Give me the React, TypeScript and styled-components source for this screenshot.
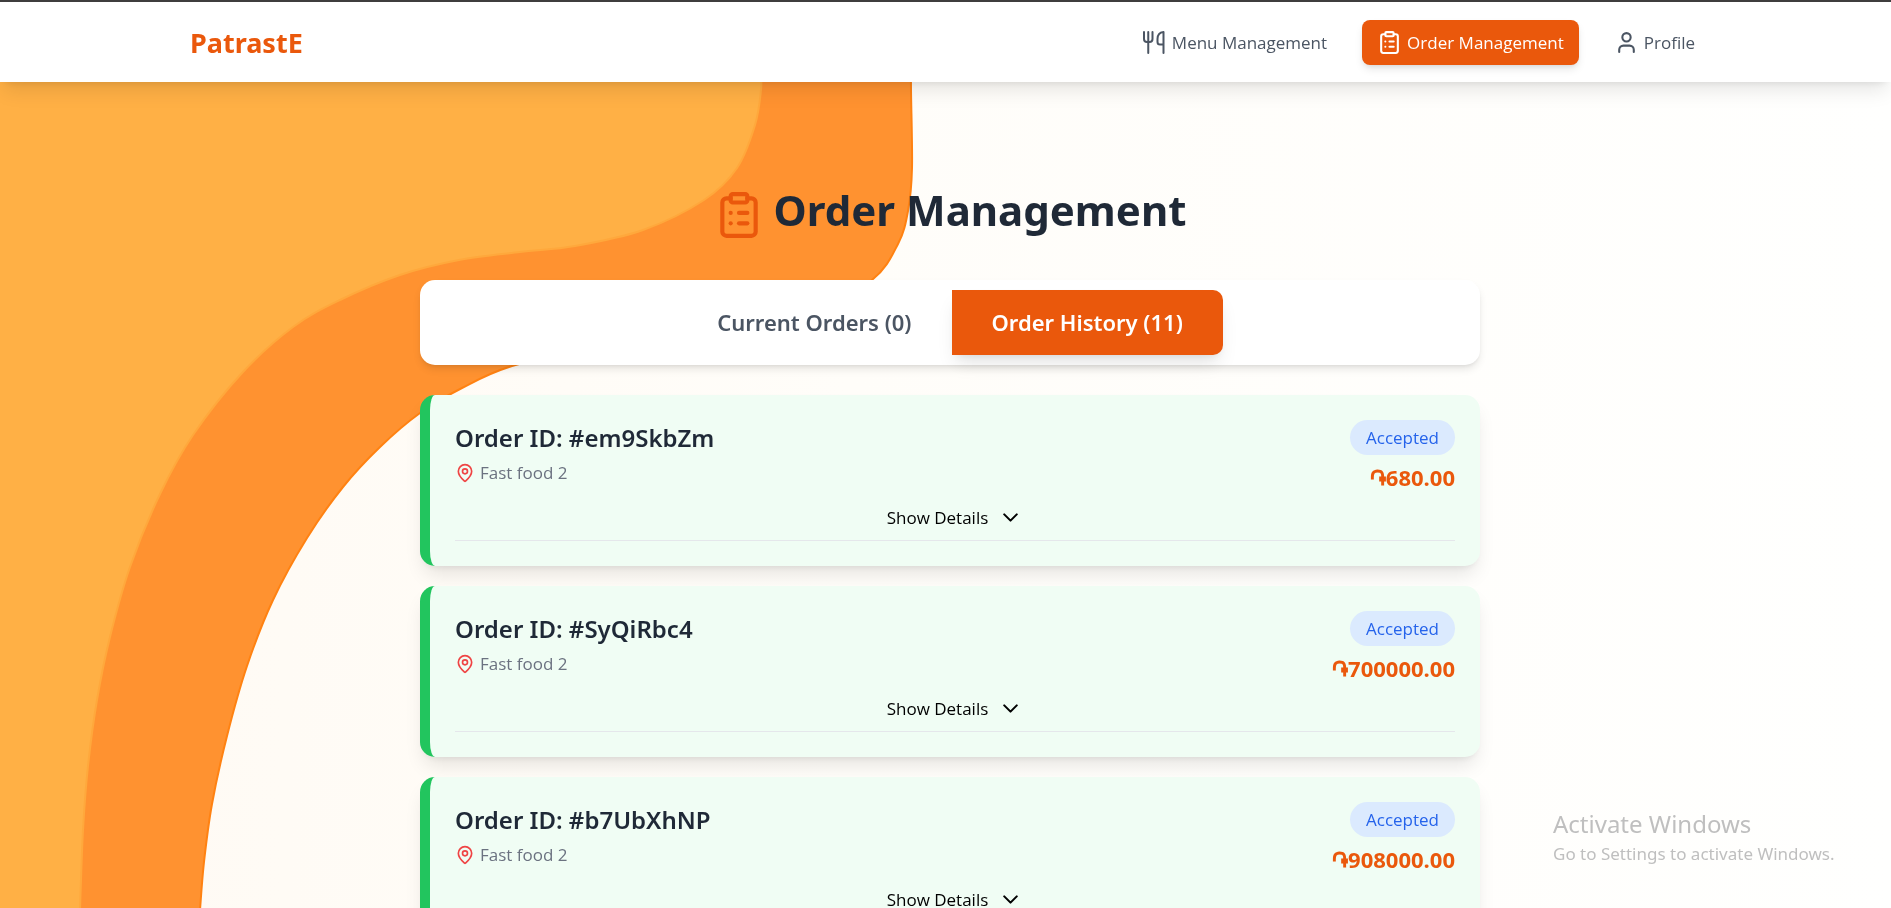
import React from "react";
import styled, { createGlobalStyle, css } from "styled-components";
import { ChevronDown, ClipboardList, MapPin, User } from "lucide-react";

const displayFont = `"Segoe UI", "Noto Sans", "Open Sans", sans-serif`;
const textFont = `"Segoe UI", "Open Sans", "Noto Sans", sans-serif`;

const GlobalStyle = createGlobalStyle`
  *, *::before, *::after { box-sizing: border-box; }
  body {
    margin: 0;
    background: #fffdfa;
    color: #1f2937;
    font-family: ${textFont};
    font-size: 17px;
    line-height: 25px;
  }
  h1, h2, p, ul { margin: 0; padding: 0; }
  h1, h2 { font-family: ${displayFont}; }
  ul { list-style: none; }
  button { font: inherit; border: 0; background: none; padding: 0; cursor: pointer; }
  a { color: inherit; text-decoration: none; }
`;

const Backdrop = styled.svg`
  position: fixed;
  inset: 0;
  width: 100%;
  height: 100%;
  z-index: -1;
`;

const Page = styled.div`
  height: 100vh;
  overflow-x: hidden;
  overflow-y: auto;
  scrollbar-width: none;
`;

const Header = styled.header`
  position: sticky;
  top: 0;
  z-index: 10;
  padding: 18px 0 17px 9px;
  border-top: 2px solid #3f3d3e;
  background: #fff;
  box-shadow: 0 12px 19px -4px rgba(0, 0, 0, 0.1), 0 5px 8px -5px rgba(0, 0, 0, 0.1);
`;

const HeaderInner = styled.div`
  display: flex;
  align-items: center;
  justify-content: space-between;
  max-width: 1520px;
  margin: 0 auto;
`;

const Brand = styled.a`
  font-family: ${displayFont};
  font-size: 27px;
  font-weight: 700;
  line-height: 35px;
  color: #ea580c;
`;

const Nav = styled.nav`
  display: flex;
  gap: 20px;
`;

const NavLink = styled.a<{ $active?: boolean }>`
  display: flex;
  align-items: center;
  gap: 5px;
  padding: 10px 15px;
  border-radius: 8px;
  font-weight: 500;
  color: #4b5563;
  ${(p) =>
    p.$active &&
    css`
      background: #ea580c;
      color: #fff;
      box-shadow: 0 5px 8px -1px rgba(0, 0, 0, 0.1), 0 2px 5px -2px rgba(0, 0, 0, 0.1);
    `}
`;

const Main = styled.main`
  max-width: 1129px;
  margin: 0 auto;
  padding: 103px 30px 60px 39px;
`;

const Title = styled.h1`
  display: flex;
  justify-content: center;
  gap: 10px;
  font-size: 42px;
  font-weight: 700;
  line-height: 50px;
  svg {
    margin-top: 5px;
    color: #ea580c;
  }
`;

const Tabs = styled.div`
  display: flex;
  justify-content: center;
  margin: 40px 0 30px;
  padding: 10px;
  border-radius: 15px;
  background: #fff;
  box-shadow: 0 5px 8px -1px rgba(0, 0, 0, 0.1), 0 2px 5px -2px rgba(0, 0, 0, 0.1);
`;

const Tab = styled.button<{ $active?: boolean }>`
  && {
    padding: 15px 40px;
    border-radius: ${(p) => (p.$active ? "0 10px 10px 0" : "10px 0 0 10px")};
    font-family: ${displayFont};
    font-size: 22px;
    font-weight: 600;
    line-height: 35px;
    color: ${(p) => (p.$active ? "#fff" : "#4b5563")};
    background: ${(p) => (p.$active ? "#ea580c" : "#fff")};
    box-shadow: ${(p) =>
      p.$active ? "0 12px 19px -4px rgba(0,0,0,.1), 0 5px 8px -5px rgba(0,0,0,.1)" : "none"};
  }
`;

const OrderList = styled.ul`
  display: flex;
  flex-direction: column;
  gap: 20px;
`;

const OrderCard = styled.li`
  padding: 25px;
  border-left: 10px solid #22c55e;
  border-radius: 15px;
  background: #f0fdf4;
  box-shadow: 0 12px 19px -4px rgba(0, 0, 0, 0.1), 0 5px 8px -5px rgba(0, 0, 0, 0.1);
`;

const OrderSummary = styled.div`
  display: flex;
  justify-content: space-between;
`;

const OrderInfo = styled.div<{ $end?: boolean }>`
  display: flex;
  flex-direction: column;
  align-items: ${(p) => (p.$end ? "flex-end" : "flex-start")};
  gap: 5px;
`;

const OrderId = styled.h2`
  font-size: 24px;
  font-weight: 600;
  line-height: 35px;
`;

const Place = styled.p`
  display: flex;
  align-items: center;
  gap: 5px;
  color: #6b7280;
  svg { color: #ef4444; }
`;

const Status = styled.span`
  padding: 5px 16px;
  border-radius: 18px;
  background: #dbeafe;
  color: #2563eb;
  font-weight: 500;
`;

const Price = styled.p`
  font-size: 22px;
  font-weight: 700;
  line-height: 35px;
  color: #ea580c;
`;

const DetailsBar = styled.div`
  display: flex;
  justify-content: center;
  padding: 10px 0;
  border-bottom: 1px solid #e5e7eb;
`;

const DetailsButton = styled.button`
  && {
    display: flex;
    align-items: center;
    gap: 10px;
    font-weight: 500;
    color: #000;
  }
`;

const Watermark = styled.aside`
  position: fixed;
  right: 54px;
  bottom: 42px;
  width: 284px;
  font-family: ${displayFont};
  color: #bfbfbf;
  pointer-events: none;
`;

const WatermarkTitle = styled.p`
  font-size: 24px;
  line-height: 34px;
`;

type Point = [number, number];

const innerEdge: Point[] = [
  [761, 70], [761, 90], [755, 125], [737, 168], [704, 200], [643, 230], [575, 246], [520, 252],
  [459, 260], [400, 275], [340, 300], [293, 327], [242, 373], [193, 435], [160, 494],
  [130, 567], [110, 637], [97, 700], [88, 766], [83, 830], [80, 910],
];

const outerEdge: Point[] = [
  [911, 60], [911, 90], [912, 168], [908, 211], [898, 244], [872, 280], [810, 314], [700, 334],
  [600, 346], [512, 366], [462, 388], [420, 413], [380, 447], [343, 487], [307, 538], [273, 600],
  [247, 666], [227, 736], [212, 804], [204, 862], [200, 910],
];

// Catmull-Rom spline through the points, written as cubic segments.
function spline(points: Point[]): string {
  let d = `M${points[0].join(" ")}`;
  for (let i = 0; i < points.length - 1; i++) {
    const a = points[Math.max(i - 1, 0)];
    const b = points[i];
    const c = points[i + 1];
    const e = points[Math.min(i + 2, points.length - 1)];
    d += `C${b[0] + (c[0] - a[0]) / 6} ${b[1] + (c[1] - a[1]) / 6} ${c[0] - (e[0] - b[0]) / 6} ${
      c[1] - (e[1] - b[1]) / 6
    } ${c[0]} ${c[1]}`;
  }
  return d;
}

function Waves() {
  const inner = spline(innerEdge);
  const outer = spline(outerEdge);
  return (
    <Backdrop viewBox="0 0 1891 908" preserveAspectRatio="xMinYMin slice" aria-hidden="true">
      <defs>
        <linearGradient id="cream" x1="0" x2="1" y1="0" y2="0">
          <stop offset="0" stopColor="#fffaf3" />
          <stop offset="0.45" stopColor="#fffdf9" />
          <stop offset="1" stopColor="#fffffe" />
        </linearGradient>
      </defs>
      <rect width="1891" height="908" fill="url(#cream)" />
      <path d={`${outer}L0 910L0 0L912 0Z`} fill="#ff9230" />
      <path d={outer} fill="none" stroke="#ff8212" strokeWidth="2" />
      <path d={`${inner}L0 910L0 0L762 0Z`} fill="#ffb045" />
      <path d={inner} fill="none" stroke="#ffa83c" strokeWidth="2" />
    </Backdrop>
  );
}

function CutleryIcon() {
  return (
    <svg
      width="25"
      height="25"
      viewBox="0 0 25 25"
      fill="none"
      stroke="currentColor"
      strokeWidth="2"
      strokeLinecap="round"
      strokeLinejoin="round"
      aria-hidden="true"
    >
      <path d="M2 2v7q0 3 3 3h2.500q3 0 3-3V2M6.250 2v21" />
      <path d="M21.500 2v21M21.500 2c-4 .5-6 3-6 7v3q0 2.500 2.500 2.500H21.500" />
    </svg>
  );
}

const orders = [
  { id: "em9SkbZm", place: "Fast food 2", price: "680.00" },
  { id: "SyQiRbc4", place: "Fast food 2", price: "700000.00" },
  { id: "b7UbXhNP", place: "Fast food 2", price: "908000.00" },
];

export default function App() {
  return (
    <>
      <GlobalStyle />
      <Waves />
      <Page>
        <Header>
          <HeaderInner>
            <Brand href="#">PatrastE</Brand>
            <Nav>
              <NavLink href="#menu">
                <CutleryIcon />
                Menu Management
              </NavLink>
              <NavLink href="#orders" $active aria-current="page">
                <ClipboardList size={25} />
                Order Management
              </NavLink>
              <NavLink href="#profile">
                <User size={25} />
                Profile
              </NavLink>
            </Nav>
          </HeaderInner>
        </Header>
        <Main>
          <Title>
            <ClipboardList size={50} />
            Order Management
          </Title>
          <Tabs role="tablist">
            <Tab role="tab" aria-selected={false}>Current Orders (0)</Tab>
            <Tab role="tab" aria-selected $active>Order History (11)</Tab>
          </Tabs>
          <OrderList>
            {orders.map((order) => (
              <OrderCard key={order.id}>
                <OrderSummary>
                  <OrderInfo>
                    <OrderId>Order ID: #{order.id}</OrderId>
                    <Place>
                      <MapPin size={20} />
                      {order.place}
                    </Place>
                  </OrderInfo>
                  <OrderInfo $end>
                    <Status>Accepted</Status>
                    <Price>֏{order.price}</Price>
                  </OrderInfo>
                </OrderSummary>
                <DetailsBar>
                  <DetailsButton>
                    Show Details
                    <ChevronDown size={25} />
                  </DetailsButton>
                </DetailsBar>
              </OrderCard>
            ))}
          </OrderList>
        </Main>
      </Page>
      <Watermark>
        <WatermarkTitle>Activate Windows</WatermarkTitle>
        <p>Go to Settings to activate Windows.</p>
      </Watermark>
    </>
  );
}
